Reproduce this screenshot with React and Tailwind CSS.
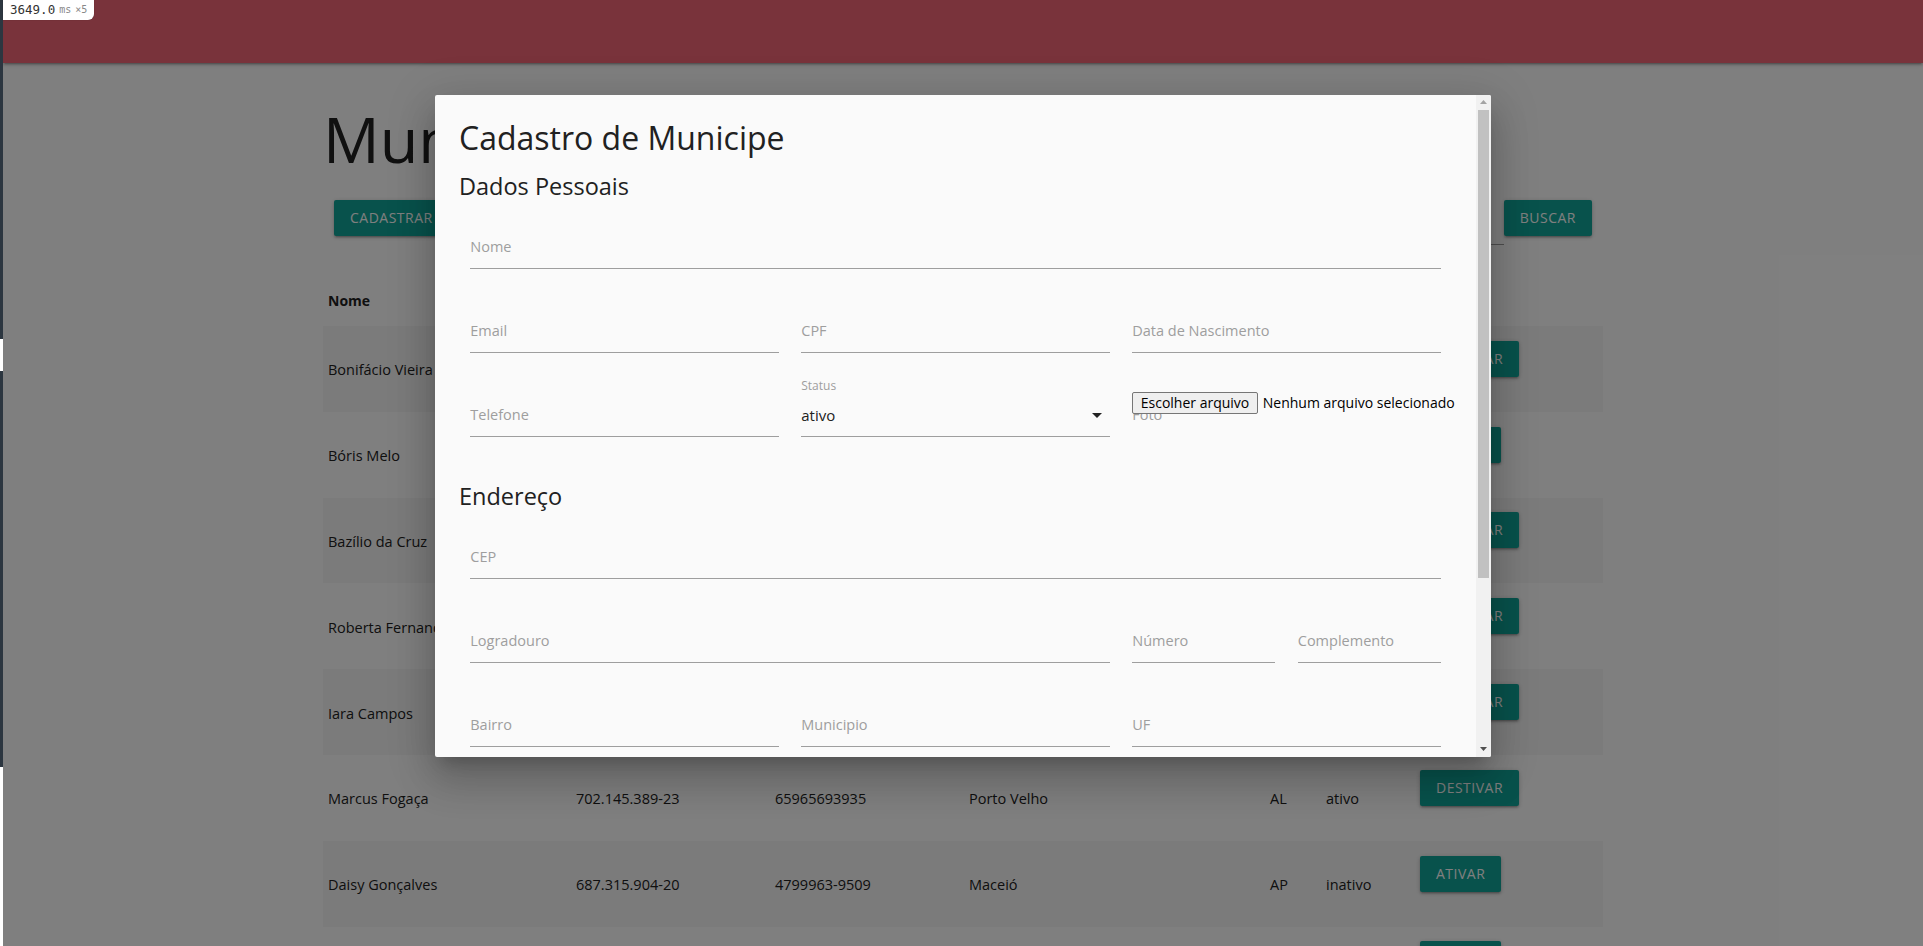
import React from "react";

const rows = [
  { n: "Bonifácio Vieira", cpf: "415.236.870-12", tel: "6932215478", city: "Ji-Paraná", uf: "RO", st: "ativo" },
  { n: "Bóris Melo", cpf: "538.914.207-66", tel: "6998124-3317", city: "Cacoal", uf: "RO", st: "inativo" },
  { n: "Bazílio da Cruz", cpf: "291.604.558-31", tel: "8231457789", city: "Arapiraca", uf: "AL", st: "ativo" },
  { n: "Roberta Fernandes", cpf: "863.072.114-45", tel: "9634128-5501", city: "Macapá", uf: "AP", st: "ativo" },
  { n: "Iara Campos", cpf: "174.983.625-07", tel: "6937712094", city: "Vilhena", uf: "RO", st: "ativo" },
  { n: "Marcus Fogaça", cpf: "702.145.389-23", tel: "65965693935", city: "Porto Velho", uf: "AL", st: "ativo" },
  { n: "Daisy Gonçalves", cpf: "687.315.904-20", tel: "4799963-9509", city: "Maceió", uf: "AP", st: "inativo" },
  { n: "Caio Moreira", cpf: "356.829.410-88", tel: "6981230-4467", city: "Ariquemes", uf: "RO", st: "inativo" },
];

function Btn({ children, className = "" }) {
  return (
    <button
      className={`h-[36px] px-4 rounded-[2px] bg-[#10a498] text-white text-[14px] leading-[36px] tracking-[0.5px] uppercase whitespace-nowrap shadow-[0_2px_2px_0_rgba(0,0,0,0.14),0_3px_1px_-2px_rgba(0,0,0,0.12),0_1px_5px_0_rgba(0,0,0,0.2)] ${className}`}
    >
      {children}
    </button>
  );
}

function Field({ label, w }) {
  return (
    <div className={`${w} px-[11.25px]`}>
      <div className="h-[45px] border-b border-[#9e9e9e] flex items-end pb-[11px]">
        <span className="text-[14.5px] leading-[20px] text-[#9e9e9e]">{label}</span>
      </div>
    </div>
  );
}

function Caret() {
  return (
    <svg width="10" height="5" viewBox="0 0 10 5" className="absolute right-[8px] top-[21px]">
      <path d="M0 0 L10 0 L5 5 Z" fill="#222" />
    </svg>
  );
}

function ScrollBar() {
  return (
    <div className="w-[15px] shrink-0 h-full bg-[#f1f1f1] flex flex-col">
      <div className="h-[15px] flex items-center justify-center">
        <svg width="7" height="4" viewBox="0 0 7 4">
          <path d="M0 4 L7 4 L3.5 0 Z" fill="#a3a3a3" />
        </svg>
      </div>
      <div className="flex-1 px-[2px]">
        <div className="h-[468px] bg-[#c1c1c1]" />
      </div>
      <div className="h-[15px] flex items-center justify-center">
        <svg width="7" height="4" viewBox="0 0 7 4">
          <path d="M0 0 L7 0 L3.5 4 Z" fill="#505050" />
        </svg>
      </div>
    </div>
  );
}

export default function App() {
  return (
    <div className="relative h-[946px] w-full overflow-hidden flex bg-white font-['Open_Sans',sans-serif]">
      {/* left edge strip */}
      <div className="w-[3px] shrink-0 flex flex-col">
        <div className="h-[339px] bg-[#2c3640]" />
        <div className="h-[32px] bg-white" />
        <div className="h-[396px] bg-[#2c3640]" />
        <div className="flex-1 bg-white" />
      </div>

      {/* main viewport */}
      <div className="relative flex-1 min-w-0 overflow-hidden bg-white">
        <nav className="relative z-10 h-[63px] bg-[#f26676] shadow-[0_2px_2px_0_rgba(0,0,0,0.14),0_3px_1px_-2px_rgba(0,0,0,0.12),0_1px_5px_0_rgba(0,0,0,0.2)]" />

        <div className="w-[1280px] mx-auto">
          <h1 className="mt-[41px] text-[63px] leading-[70px] text-[#212121] font-normal">Municipes</h1>

          <div className="mt-[26px] flex items-start px-[11px]">
            <Btn>Cadastrar</Btn>
            <div className="flex-1 ml-[24px] h-[45px] border-b border-[#9e9e9e]" />
            <Btn>Buscar</Btn>
          </div>

          <div className="mt-[25px] h-[56px] grid grid-cols-[248px_199px_194px_301px_56px_94px_1fr] items-center text-[14px] font-bold text-[#212121]">
            <div className="px-[5px] pt-[4px]">Nome</div>
            <div className="px-[5px] pt-[4px]">CPF</div>
            <div className="px-[5px] pt-[4px]">Telefone</div>
            <div className="px-[5px] pt-[4px]">Município</div>
            <div className="px-[5px] pt-[4px]">UF</div>
            <div className="px-[5px] pt-[4px]">Status</div>
            <div className="px-[5px] pt-[4px]">Ações</div>
          </div>

          {rows.map((r, i) => (
            <div
              key={i}
              className={`h-[85.8px] grid grid-cols-[248px_199px_194px_301px_56px_94px_1fr] items-center text-[14.5px] leading-[20px] text-[#212121] ${i % 2 === 0 ? "bg-[#f7f7f7]" : ""}`}
            >
              <div className="px-[5px] pt-[3px] whitespace-nowrap">{r.n}</div>
              <div className="px-[5px] pt-[3px]">{r.cpf}</div>
              <div className="px-[5px] pt-[3px]">{r.tel}</div>
              <div className="px-[5px] pt-[3px]">{r.city}</div>
              <div className="px-[5px] pt-[3px]">{r.uf}</div>
              <div className="px-[5px] pt-[3px]">{r.st}</div>
              <div className="px-[5px]">
                <Btn className="mb-[20px]">{r.st === "ativo" ? "Destivar" : "Ativar"}</Btn>
              </div>
            </div>
          ))}
        </div>

        {/* modal overlay */}
        <div className="absolute inset-0 z-20 bg-black/50" />

        {/* modal */}
        <div className="absolute z-30 left-1/2 -translate-x-1/2 top-[10%] w-[55%] h-[70%] flex overflow-hidden bg-[#fafafa] rounded-[2px] shadow-[0_24px_38px_3px_rgba(0,0,0,0.14),0_9px_46px_8px_rgba(0,0,0,0.12),0_11px_15px_-7px_rgba(0,0,0,0.2)]">
          <div className="flex-1 min-w-0 h-full overflow-hidden">
            <div className="min-h-[894px] p-6 text-[#212121]">
              <h4 className="text-[32px] leading-[37px] font-normal">Cadastro de Municipe</h4>
              <h5 className="mt-[16px] text-[23.5px] leading-[28px] font-normal">Dados Pessoais</h5>

              <div className="mt-[24px] flex">
                <Field label="Nome" w="w-full" />
              </div>
              <div className="mt-[39.5px] flex">
                <Field label="Email" w="w-1/3" />
                <Field label="CPF" w="w-1/3" />
                <Field label="Data de Nascimento" w="w-1/3" />
              </div>
              <div className="mt-[39px] flex">
                <Field label="Telefone" w="w-1/3" />
                <div className="w-1/3 px-[11.25px]">
                  <div className="relative h-[45px] border-b border-[#9e9e9e] flex items-end pb-[11px]">
                    <span className="absolute left-0 top-[-14px] text-[12px] leading-[16px] text-[#9e9e9e]">Status</span>
                    <span className="text-[15px] leading-[20px] text-[#212121]">ativo</span>
                    <Caret />
                  </div>
                </div>
                <div className="w-1/3 px-[11.25px]">
                  <div className="relative h-[45px] flex items-end pb-[12px]">
                    <span className="text-[14.5px] leading-[20px] text-[#9e9e9e]">Foto</span>
                    <div className="absolute left-0 top-0 z-10 flex items-center gap-[5px] whitespace-nowrap text-[14px] text-black">
                      <span className="h-[22px] px-[7.5px] border border-[#767676] bg-[#efefef] rounded-[2px] leading-[20px]">Escolher arquivo</span>
                      <span className="leading-[20px]">Nenhum arquivo selecionado</span>
                    </div>
                  </div>
                </div>
              </div>

              <h5 className="mt-[44.5px] text-[23.5px] leading-[28px] font-normal">Endereço</h5>
              <div className="mt-[24.5px] flex">
                <Field label="CEP" w="w-full" />
              </div>
              <div className="mt-[39px] flex">
                <Field label="Logradouro" w="w-2/3" />
                <Field label="Número" w="w-1/6" />
                <Field label="Complemento" w="w-1/6" />
              </div>
              <div className="mt-[39px] flex">
                <Field label="Bairro" w="w-1/3" />
                <Field label="Municipio" w="w-1/3" />
                <Field label="UF" w="w-1/3" />
              </div>
              <div className="mt-[40px] flex justify-end px-[11.25px]">
                <Btn>Salvar</Btn>
              </div>
            </div>
          </div>
          <ScrollBar />
        </div>
      </div>

      {/* perf badge */}
      <div className="absolute left-[3px] top-0 z-50 h-[20px] px-[7px] flex items-center gap-[4px] bg-white rounded-br-[6px] shadow-[0_0_1px_rgba(0,0,0,0.4)] font-['DejaVu_Sans_Mono',monospace]">
        <span className="text-[12.5px] leading-[20px] text-[#333]">3649.0</span>
        <span className="text-[10px] leading-[20px] text-[#888]">ms</span>
        <span className="text-[10px] leading-[20px] text-[#888]">×5</span>
      </div>
    </div>
  );
}
